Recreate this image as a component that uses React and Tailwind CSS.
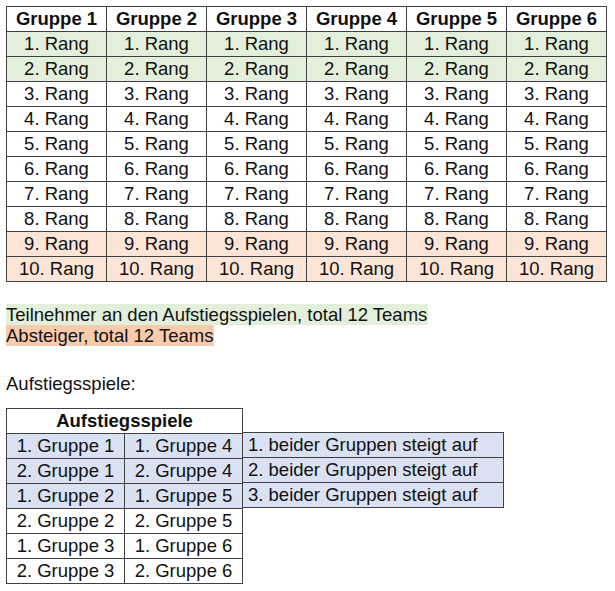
import React from "react";

const groups = [1, 2, 3, 4, 5, 6];
const ranks = [1, 2, 3, 4, 5, 6, 7, 8, 9, 10];

const rowBg = (rank) => {
  if (rank <= 2) return "bg-[#e2efda]";
  if (rank >= 9) return "bg-[#fce4d6]";
  return "bg-white";
};

const matches = [
  ["1. Gruppe 1", "1. Gruppe 4", "1. beider Gruppen steigt auf"],
  ["2. Gruppe 1", "2. Gruppe 4", "2. beider Gruppen steigt auf"],
  ["1. Gruppe 2", "1. Gruppe 5", "3. beider Gruppen steigt auf"],
  ["2. Gruppe 2", "2. Gruppe 5", null],
  ["1. Gruppe 3", "1. Gruppe 6", null],
  ["2. Gruppe 3", "2. Gruppe 6", null],
];

const App = () => {
  return (
    <div className="min-h-screen bg-white pl-[6px] pt-[6px] font-['Liberation_Sans',Arial,sans-serif] text-[18.5px] text-[#111]">
      {/* Gruppen table */}
      <div className="grid w-[601px] grid-cols-[repeat(6,100px)] border-l border-t border-[#404040]">
        {groups.map((g) => (
          <div
            key={g}
            className="flex h-[25px] items-center justify-center border-b border-r border-[#404040] font-bold leading-none"
          >
            Gruppe {g}
          </div>
        ))}
        {ranks.map((r) =>
          groups.map((g) => (
            <div
              key={`${r}-${g}`}
              className={`flex h-[25px] items-center justify-center border-b border-r border-[#404040] leading-none ${rowBg(r)}`}
            >
              {r}. Rang
            </div>
          ))
        )}
      </div>

      {/* Legend */}
      <div className="mt-[22px] leading-[21px]">
        <div>
          <span className="inline-block h-[21px] bg-[#e2efda] pr-[1px]">
            Teilnehmer an den Aufstiegsspielen, total 12 Teams
          </span>
        </div>
        <div>
          <span className="inline-block h-[21px] bg-[#f8cbad] pr-[1px]">
            Absteiger, total 12 Teams
          </span>
        </div>
        <div className="mt-[27px]">Aufstiegsspiele:</div>
      </div>

      {/* Aufstiegsspiele table */}
      <div className="mt-[14px] flex">
        <div className="grid w-[237px] grid-cols-[118px_118px] border-l border-t border-[#404040]">
          <div className="col-span-2 flex h-[25px] items-center justify-center border-b border-r border-[#404040] font-bold leading-none">
            Aufstiegsspiele
          </div>
          {matches.map((m, i) => (
            <React.Fragment key={i}>
              <div
                className={`flex h-[25px] items-center justify-center border-b border-r border-[#404040] leading-none ${m[2] ? "bg-[#d9e1f2]" : "bg-white"}`}
              >
                {m[0]}
              </div>
              <div
                className={`flex h-[25px] items-center justify-center border-b border-r border-[#404040] leading-none ${m[2] ? "bg-[#d9e1f2]" : "bg-white"}`}
              >
                {m[1]}
              </div>
            </React.Fragment>
          ))}
        </div>
        <div className="mt-[24px] flex w-[261px] flex-col self-start border-t border-[#404040]">
          {matches
            .filter((m) => m[2])
            .map((m, i) => (
              <div
                key={i}
                className="flex h-[25px] items-center border-b border-r border-[#404040] bg-[#d9e1f2] pl-[5px] leading-none"
              >
                {m[2]}
              </div>
            ))}
        </div>
      </div>
    </div>
  );
};

export default App;
